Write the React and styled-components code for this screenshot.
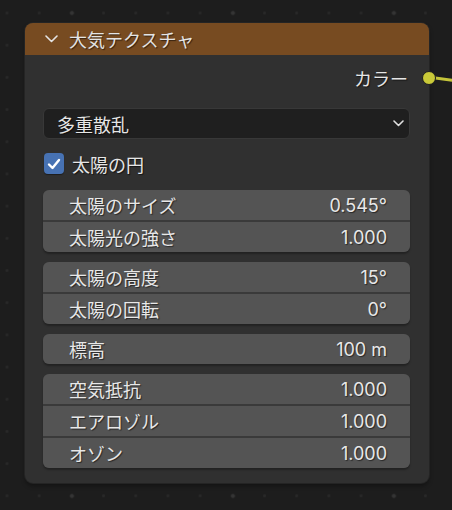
import React from 'react'
import styled, { createGlobalStyle } from 'styled-components'

const GlobalStyle = createGlobalStyle`
  html, body {
    margin: 0;
    padding: 0;
    height: 100%;
  }
  body {
    background-color: #1d1d1d;
    background-image:
      radial-gradient(circle, #343434 1.8px, transparent 2.3px),
      radial-gradient(circle, #282828 1.2px, transparent 1.7px);
    background-size: 161px 161px, 32.2px 32.2px;
    background-position: -8.5px -67.5px, -9.1px -3.1px;
    font-family: Inter, 'Noto Sans CJK JP', sans-serif;
    overflow: hidden;
  }
`

const Canvas = styled.div`
  padding: 23px 0 0 25px;
`

const Node = styled.div`
  position: relative;
  width: 404px;
  background: #303030;
  border-radius: 8px;
  box-shadow: 0 0 0 1px #242424, 0 3px 4px rgba(0, 0, 0, 0.35);
`

const Header = styled.div`
  height: 32px;
  display: flex;
  align-items: center;
  padding-left: 20px;
  gap: 11px;
  background: #774b21;
  border-radius: 8px 8px 0 0;
  color: #e4e4e4;
  font-size: 18px;
  text-shadow: 1px 1px 1px rgba(0, 0, 0, 0.55);
`

const Body = styled.div`
  display: flex;
  flex-direction: column;
  padding: 0 19px 15px 18px;
`

const OutputRow = styled.div`
  height: 46px;
  display: flex;
  align-items: center;
  justify-content: flex-end;
  padding-right: 2px;
  color: #e6e6e6;
  font-size: 18px;
  text-shadow: 1px 1px 1px rgba(0, 0, 0, 0.55);
`

const Socket = styled.span`
  position: absolute;
  right: -7px;
  top: 48px;
  width: 12px;
  height: 12px;
  border-radius: 50%;
  background: #c9c938;
  border: 1px solid #1e1e1e;
`

const Wire = styled.svg`
  position: absolute;
  left: 403px;
  top: 48px;
  overflow: visible;
`

const Select = styled.div`
  margin-top: 7px;
  height: 31px;
  box-sizing: border-box;
  display: flex;
  align-items: center;
  justify-content: space-between;
  padding: 0 5px 0 13px;
  background: #1f1f1f;
  border: 1px solid #383838;
  border-radius: 6px;
  color: #e6e6e6;
  font-size: 18px;
  text-shadow: 1px 1px 1px rgba(0, 0, 0, 0.6);
`

const CheckRow = styled.label`
  margin-top: 14px;
  height: 21px;
  display: flex;
  align-items: center;
  gap: 8px;
  padding-left: 1px;
  color: #e6e6e6;
  font-size: 18px;
  text-shadow: 1px 1px 1px rgba(0, 0, 0, 0.6);
`

const Box = styled.span`
  width: 20px;
  height: 21px;
  border-radius: 4px;
  background: #4772b3;
  display: flex;
  align-items: center;
  justify-content: center;
  box-shadow: 0 1px 1px rgba(0, 0, 0, 0.4);
`

const Groups = styled.div`
  margin-top: 16px;
  display: flex;
  flex-direction: column;
  gap: 10px;
`

const Group = styled.div`
  display: flex;
  flex-direction: column;
  gap: 2px;
  background: #3a3a3a;
  border-radius: 6px;
  overflow: hidden;
  box-shadow: 0 2px 2px rgba(0, 0, 0, 0.3);
`

const Field = styled.div`
  height: 30px;
  display: flex;
  align-items: center;
  justify-content: space-between;
  padding: 0 23px 0 26px;
  background: #545454;
  color: #e8e8e8;
  font-size: 18px;
  text-shadow: 1px 1px 1px rgba(0, 0, 0, 0.55);
`

const groups = [
  [
    ['太陽のサイズ', '0.545°'],
    ['太陽光の強さ', '1.000'],
  ],
  [
    ['太陽の高度', '15°'],
    ['太陽の回転', '0°'],
  ],
  [['標高', '100 m']],
  [
    ['空気抵抗', '1.000'],
    ['エアロゾル', '1.000'],
    ['オゾン', '1.000'],
  ],
]

export default function App() {
  return (
    <Canvas>
      <GlobalStyle />
      <Node>
        <Header>
          <svg width="13" height="8" viewBox="0 0 13 8">
            <polyline
              points="1,1 6.5,6.5 12,1"
              fill="none"
              stroke="#e4e4e4"
              strokeWidth="1.6"
              strokeLinecap="round"
              strokeLinejoin="round"
            />
          </svg>
          <span>大気テクスチャ</span>
        </Header>
        <Wire width="30" height="12">
          <line x1="0" y1="6" x2="30" y2="10" stroke="#c4c43a" strokeWidth="3" />
        </Wire>
        <Socket />
        <Body>
          <OutputRow>カラー</OutputRow>
          <Select>
            <span>多重散乱</span>
            <svg width="11" height="7" viewBox="0 0 11 7">
              <polyline
                points="1,1 5.5,5.5 10,1"
                fill="none"
                stroke="#e0e0e0"
                strokeWidth="1.6"
                strokeLinecap="round"
                strokeLinejoin="round"
              />
            </svg>
          </Select>
          <CheckRow>
            <Box>
              <svg width="14" height="12" viewBox="0 0 14 12">
                <polyline
                  points="2,6.5 5.5,10 12,2"
                  fill="none"
                  stroke="#ffffff"
                  strokeWidth="2.4"
                  strokeLinecap="round"
                  strokeLinejoin="round"
                />
              </svg>
            </Box>
            <span>太陽の円</span>
          </CheckRow>
          <Groups>
            {groups.map((g, i) => (
              <Group key={i}>
                {g.map(([label, value]) => (
                  <Field key={label}>
                    <span>{label}</span>
                    <span>{value}</span>
                  </Field>
                ))}
              </Group>
            ))}
          </Groups>
        </Body>
      </Node>
    </Canvas>
  )
}
